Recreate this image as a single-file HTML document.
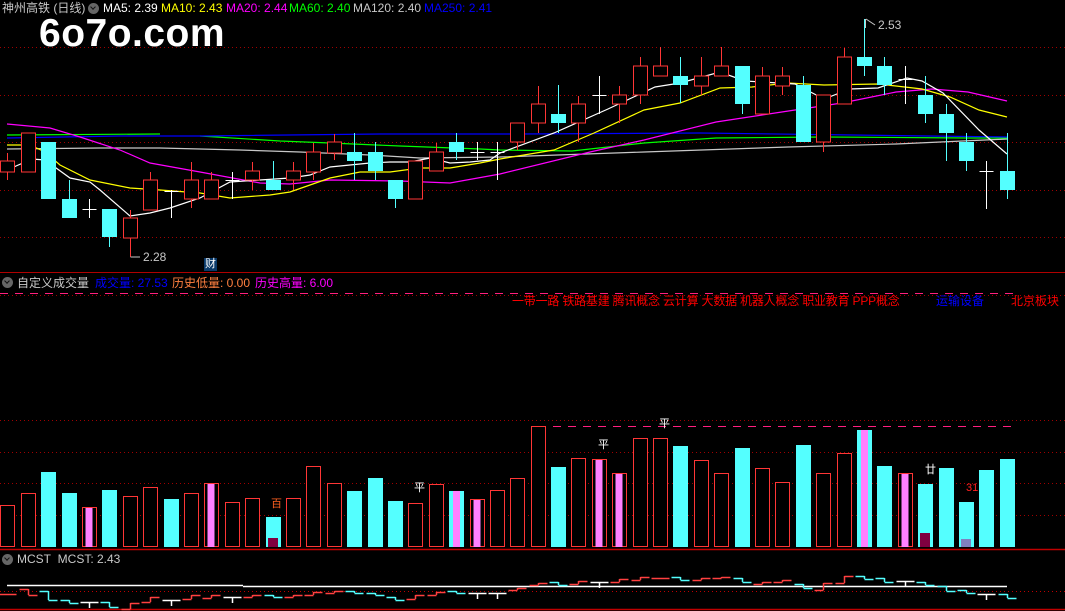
<!DOCTYPE html>
<html><head><meta charset="utf-8">
<style>
html,body{margin:0;padding:0;background:#000;width:1065px;height:611px;overflow:hidden}
body{position:relative;font-family:"Liberation Sans","Noto Sans CJK SC",sans-serif}
.t{position:absolute;font-size:12px;white-space:nowrap;line-height:14px}
svg{position:absolute;left:0;top:0}
.ic{position:absolute;width:11px;height:11px;border-radius:50%;background:#666}
.ic:after{content:"";position:absolute;left:3px;top:2px;width:3px;height:3px;border-right:1.5px solid #111;border-bottom:1.5px solid #111;transform:rotate(45deg)}
</style></head><body>
<svg id="s" width="1065" height="611" xmlns="http://www.w3.org/2000/svg"></svg>

<div class="t" style="left:2px;top:1px;color:#c8c8c8;font-size:12px">神州高铁 (日线)</div>
<div class="ic" style="left:88px;top:3px"></div>
<div class="t" style="left:103px;top:1px;color:#fff">MA5: 2.39</div>
<div class="t" style="left:161px;top:1px;color:#ffff00">MA10: 2.43</div>
<div class="t" style="left:226px;top:1px;color:#ff00ff">MA20: 2.44</div>
<div class="t" style="left:289px;top:1px;color:#00ff00">MA60: 2.40</div>
<div class="t" style="left:353px;top:1px;color:#c8c8c8">MA120: 2.40</div>
<div class="t" style="left:424px;top:1px;color:#0000ff">MA250: 2.41</div>
<div class="t" style="left:39px;top:12px;color:#fff;font-size:39px;line-height:44px;font-weight:bold;letter-spacing:0.5px">6o7o.com</div>

<div class="t" style="left:143px;top:250px;color:#c8c8c8;font-size:12px">2.28</div>
<div class="t" style="left:878px;top:18px;color:#c8c8c8;font-size:12px">2.53</div>
<div class="t" style="left:204px;top:258px;color:#fff;background:#0a3a6a;font-size:11px;line-height:13px;padding:0 1px">财</div>

<div class="ic" style="left:2px;top:277px"></div>
<div class="t" style="left:17px;top:276px;color:#c8c8c8">自定义成交量</div>
<div class="t" style="left:95px;top:276px;color:#0000ff">成交量: 27.53</div>
<div class="t" style="left:172px;top:276px;color:#ff8040">历史低量: 0.00</div>
<div class="t" style="left:255px;top:276px;color:#ff00ff">历史高量: 6.00</div>

<div class="t" style="left:512px;top:294px;color:#ff0000;font-size:12px;letter-spacing:-0.2px">一带一路 铁路基建 腾讯概念 云计算 大数据 机器人概念 职业教育 PPP概念</div>
<div class="t" style="left:936px;top:294px;color:#0000ff;font-size:12px">运输设备</div>
<div class="t" style="left:1011px;top:294px;color:#ff0000;font-size:12px">北京板块</div>

<div class="t" style="left:271px;top:497px;color:#ff6020;font-size:11px">百</div>
<div class="t" style="left:414px;top:481px;color:#fff;font-size:11px">平</div>
<div class="t" style="left:598px;top:438px;color:#fff;font-size:11px">平</div>
<div class="t" style="left:659px;top:417px;color:#fff;font-size:11px">平</div>
<div class="t" style="left:925px;top:463px;color:#fff;font-size:11px">廿</div>
<div class="t" style="left:966px;top:481px;color:#ff2020;font-size:11px">31</div>

<div class="ic" style="left:2px;top:554px"></div>
<div class="t" style="left:17px;top:552px;color:#c8c8c8">MCST&nbsp; MCST: 2.43</div>

<script>
var S=document.getElementById('s'),h='';
function L(x1,y1,x2,y2,c,w,d){h+='<line x1="'+x1+'" y1="'+y1+'" x2="'+x2+'" y2="'+y2+'" stroke="'+c+'" stroke-width="'+(w||1)+'"'+(d?' stroke-dasharray="'+d+'"':'')+'/>';}
function R(x,y,w,hh,f,s){h+='<rect x="'+x+'" y="'+y+'" width="'+w+'" height="'+hh+'" fill="'+(f||'none')+'"'+(s?' stroke="'+s+'"':'')+'/>';}
function P(pts,c){h+='<polyline fill="none" stroke="'+c+'" stroke-width="1.2" points="'+pts+'"/>';}
var RED='#ff3636',CY='#54ffff';
[47,95,142,190,237].forEach(function(y){L(0,y+.5,1065,y+.5,'#a00000',1,'1 3');});
L(0,272.5,1065,272.5,'#b00000',1);
L(0,293.5,1015,293.5,'#ff2080',1,'8 7');L(0,295.5,1065,295.5,'#a00000',1,'1 3');
[420,452,483,515].forEach(function(y){L(0,y+.5,1065,y+.5,'#a00000',1,'1 3');});
L(553,426.5,1015,426.5,'#ff2080',1,'8 7');
L(0,549.5,1065,549.5,'#c00000',1.5);
L(0,591.5,1065,591.5,'#c00000',1,'1 3');
L(0,609.5,1065,609.5,'#c00000',1.5);
P('7,149 100,148 160,148 240,150 300,152 370,155 420,158 500,157 644,152 788,147 896,144 1007,139','#c8c8c8');
P('7,135 160,134','#00ff00');P('200,136 280,141 330,143 400,146 480,149 500,150 572,151 644,143 716,138 824,137 968,138 1007,138','#00ff00');
P('7,138 120,136 200,136 380,134 520,134 700,133 1007,137','#0000ff');
P('7,124 50,128 80,137 120,150 150,163 200,172 260,183 290,184 330,180 400,181 450,183 500,174 590,152 644,140 716,122 795,110 842,103 896,92 932,89 968,92 1007,101','#ff00ff');
P('7,145 30,145 45,152 60,165 90,180 130,188 160,190 200,193 230,198 270,195 290,192 310,185 330,178 360,172 390,172 420,168 450,168 480,163 500,159 554,150 594,133 644,110 680,103 720,88 752,87 788,83 824,85 878,84 896,86 922,89 950,97 979,110 1007,117','#ffff00');
P('7,170 32,159 45,160 70,178 90,182 100,190 130,216 150,213 170,208 200,198 230,182 260,180 290,178 310,175 330,167 350,165 370,163 390,162 410,162 430,158 450,163 470,162 490,160 500,153 554,133 608,109 655,87 680,83 720,72 745,81 795,84 824,99 850,89 878,88 907,78 922,81 943,93 979,130 1007,154','#ffffff');
var C=[['r',161,172,153,180],['r',133,172,133,172],['c',142,199,142,199],['c',199,218,180,218],['w',209,209,199,218],['c',209,237,209,247],['r',218,238,210,257],['r',180,210,172,210],['w',191,191,190,218],['r',180,199,162,208],['r',180,199,172,199],['w',180,180,172,199],['r',171,180,162,190],['c',180,190,161,190],['r',171,180,162,190],['r',152,172,143,180],['r',142,153,134,160],['c',152,161,133,180],['c',152,171,142,180],['c',180,199,180,208],['r',161,199,161,199],['r',152,171,143,171],['c',142,152,133,160],['w',152,152,142,160],['w',152,152,142,180],['r',123,142,123,150],['r',104,123,86,133],['c',114,123,85,133],['r',104,123,96,142],['w',95,95,76,114],['r',95,104,86,123],['r',66,95,57,104],['r',66,76,47,76],['c',76,85,57,103],['r',76,86,57,95],['r',66,76,47,76],['c',66,104,66,114],['r',76,114,67,114],['r',76,86,67,95],['c',85,142,76,142],['r',95,142,95,152],['r',57,104,48,104],['c',57,66,19,76],['c',66,85,57,95],['w',79,79,66,104],['c',95,114,76,123],['c',114,133,104,161],['c',142,161,133,171],['w',171,171,161,209],['c',171,190,133,199]];
function cx(i){return 7.3+i*20.4;}
C.forEach(function(c,i){var x=Math.round(cx(i))+.5;var col=c[0]=='r'?RED:c[0]=='c'?CY:'#fff';
 L(x,c[3],x,c[4],col,1);
 if(c[0]=='w'){L(x-7,c[1]+.5,x+7,c[1]+.5,'#fff',1);}
 else if(c[0]=='r'){R(x-7,c[1],14,c[2]-c[1],'#000',RED);}
 else R(x-7.5,c[1],15,c[2]-c[1],CY);
});
L(130.5,257,140,257,'#c8c8c8',1);
L(865.5,19,865.5,28,'#c8c8c8');L(866,19,875,25,'#c8c8c8');
var V=[['r',505],['r',493],['c',472],['c',493],['p',507],['c',490],['r',496],['r',487],['c',499],['r',493],['p',483],['r',502],['r',498],['m',517],['r',498],['r',466],['r',483],['c',491],['c',478],['c',501],['r',503],['r',484],['q',491],['p',499],['r',490],['r',478],['r',426],['c',467],['r',458],['p',459],['p',473],['r',438],['r',438],['c',446],['r',460],['r',473],['c',448],['r',468],['r',482],['c',445],['r',473],['r',453],['q',430],['c',466],['p',473],['m',484],['c',468],['n',502],['c',470],['c',459]];
var B=546;
V.forEach(function(v,i){var x=Math.round(cx(i))-7;var t=v[1];
 if(v[0]=='r'||v[0]=='p'){R(x+.5,t+.5,14,B-t,'#000',RED);if(v[0]=='p')R(x+3.5,t+1,7,B-t,'#ff80ff');}
 else{R(x,t,15,B-t+1,CY);if(v[0]=='q')R(x+4,t,7,B-t+1,'#ff80ff');if(v[0]=='m')R(x+2,i<20?538:533,10,B-(i<20?538:533)+1,'#800040');if(v[0]=='n')R(x+2,539,10,8,'#8080c0');}
});
L(7,585.5,243,585.5,'#fff',1.5);L(243,586.5,1007,586.5,'#fff',1.5);
var M=[['r',594,594],['r',589,595],['c',591,600],['c',600,603],['w',602,602],['c',602,607],['r',609,603],['r',602,597],['w',600,600],['r',599,595],['r',598,595],['w',597,597],['r',597,595],['c',595,597],['r',597,595],['r',595,592],['r',593,591],['c',591,593],['c',593,595],['c',597,600],['r',599,595],['r',595,592],['c',591,593],['w',593,593],['w',593,593],['r',590,588],['r',585,583],['c',582,585],['r',584,581],['w',582,582],['r',582,579],['r',580,577],['r',578,578],['c',577,580],['r',580,578],['r',578,577],['c',578,582],['r',584,582],['r',582,580],['c',584,588],['r',590,583],['r',583,576],['c',576,579],['c',578,582],['w',581,581],['c',582,585],['c',586,591],['c',590,593],['w',594,594],['c',594,598]];
M.forEach(function(m,i){var x=Math.round(cx(i))+.5;var col=m[0]=='r'?'#ff4040':m[0]=='c'?CY:'#fff';
 if(m[0]=='w'){L(x-9,m[1]+.5,x+9,m[1]+.5,col,1.5);L(x,m[1],x,m[1]+6,col,1.5);}
 else{L(x-9,m[1]+.5,x,m[1]+.5,col,1.5);L(x,m[1],x,m[2],col,1.5);L(x,m[2]+.5,x+9,m[2]+.5,col,1.5);}
});
S.innerHTML=h;
</script>
</body></html>
